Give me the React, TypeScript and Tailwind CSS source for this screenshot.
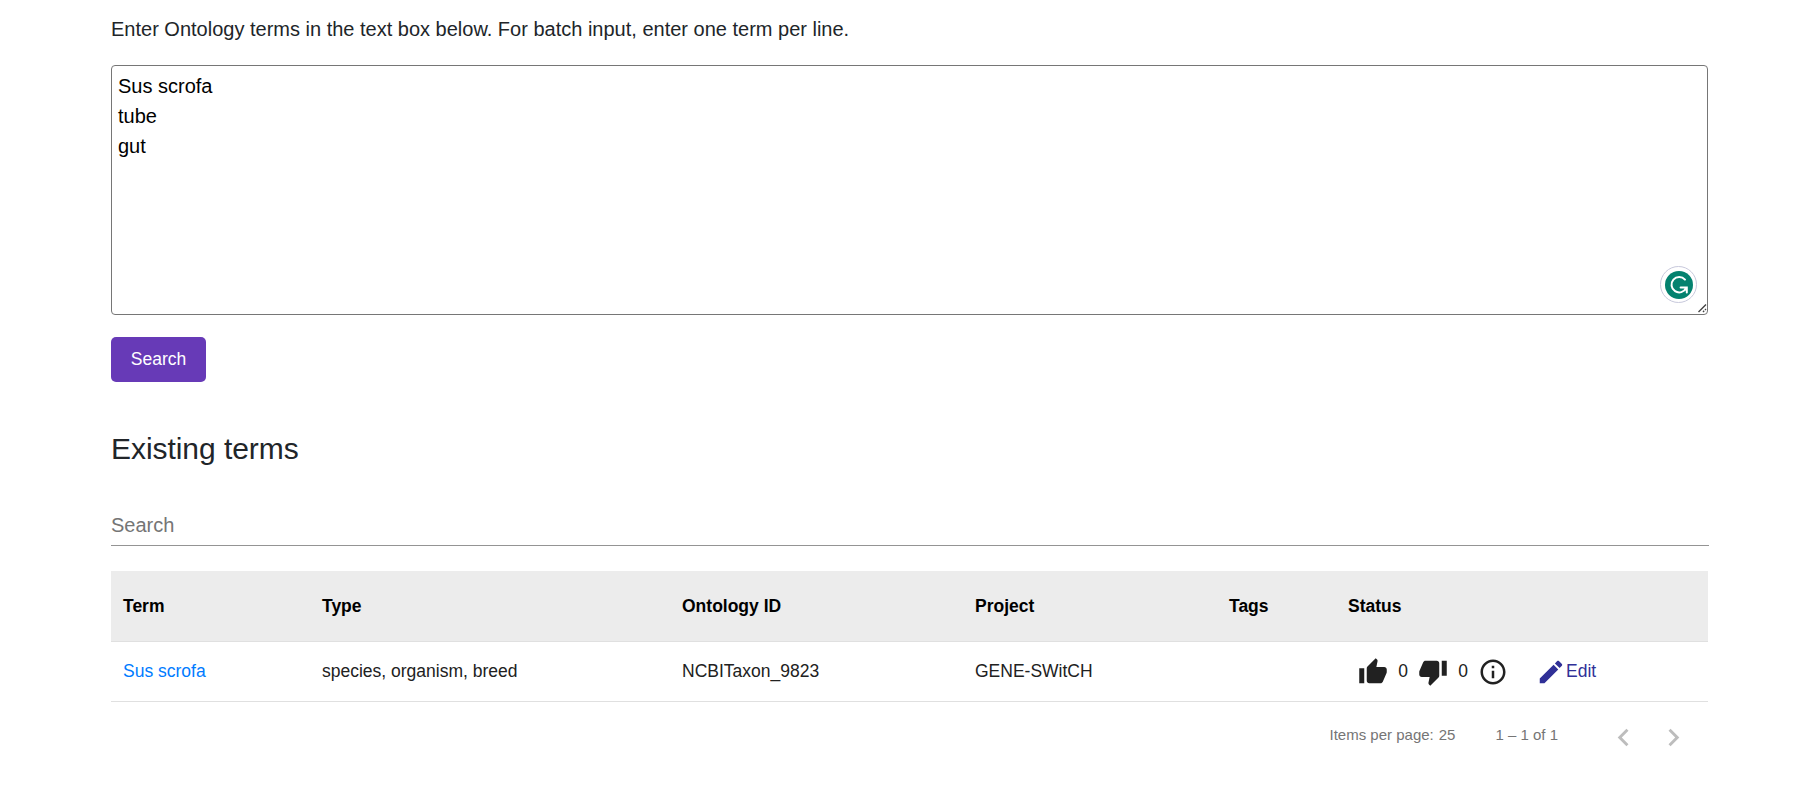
import type { ReactNode } from 'react';

const COLUMNS = 'grid grid-cols-[199px_360px_293px_254px_119px_188px_1fr] items-center pl-3';

function Icon({ d, className }: { d: string; className: string }) {
  return (
    <svg viewBox="0 0 24 24" fill="currentColor" className={`shrink-0 ${className}`}>
      <path d={d} />
    </svg>
  );
}

const THUMB_UP =
  'M1 21h4V9H1v12zm22-11c0-1.1-.9-2-2-2h-6.31l.95-4.57.03-.32c0-.41-.17-.79-.44-1.06L14.17 1 7.59 7.59C7.22 7.95 7 8.45 7 9v10c0 1.1.9 2 2 2h9c.83 0 1.54-.5 1.84-1.22l3.02-7.05c.09-.23.14-.47.14-.73v-2z';
const THUMB_DOWN =
  'M15 3H6c-.83 0-1.54.5-1.84 1.22l-3.02 7.05c-.09.23-.14.47-.14.73v2c0 1.1.9 2 2 2h6.31l-.95 4.57-.03.32c0 .41.17.79.44 1.06L9.83 23l6.59-6.59c.36-.36.58-.86.58-1.41V5c0-1.1-.9-2-2-2zm4 0v12h4V3h-4z';
const INFO =
  'M11 7h2v2h-2zm0 4h2v6h-2zm1-9C6.48 2 2 6.48 2 12s4.48 10 10 10 10-4.48 10-10S17.52 2 12 2zm0 18c-4.41 0-8-3.59-8-8s3.59-8 8-8 8 3.59 8 8-3.59 8-8 8z';
const EDIT =
  'M3 17.25V21h3.75L17.81 9.94l-3.75-3.75L3 17.25zM20.71 7.04c.39-.39.39-1.02 0-1.41l-2.34-2.34c-.39-.39-1.02-.39-1.41 0l-1.83 1.83 3.75 3.75 1.83-1.83z';
const PREV = 'M15.41 7.41L14 6l-6 6 6 6 1.41-1.41L10.83 12z';
const NEXT = 'M10 6L8.59 7.41 13.17 12l-4.58 4.59L10 18l6-6z';

function HeaderRow({ labels }: { labels: string[] }) {
  return (
    <div className={`${COLUMNS} h-[71px] border-b border-[#e0e0e0] bg-[#ececec] font-bold text-black`}>
      {labels.map((label) => (
        <div key={label}>{label}</div>
      ))}
    </div>
  );
}

function Row({ children }: { children: ReactNode }) {
  return <div className={`${COLUMNS} h-[60px] border-b border-[#e0e0e0] pb-px text-[#212121]`}>{children}</div>;
}

export default function App() {
  return (
    <main className="h-[805px] bg-white pl-[111px] pr-[94px] pt-[14px] font-['Liberation_Sans',Arial,sans-serif] text-[#212529]">
      <p className="text-[20px] leading-[30px]">
        Enter Ontology terms in the text box below. For batch input, enter one term per line.
      </p>

      <div className="relative mt-[21px] h-[250px]">
        <textarea
          className="block h-full w-full resize-none rounded-[4px] border border-[#767676] bg-white px-[6px] py-[5px] text-[20px] leading-[30px] text-black outline-none"
          defaultValue={'Sus scrofa\ntube\ngut'}
        />
        <div className="absolute right-[11px] bottom-[12px] flex size-[37px] items-center justify-center rounded-full border border-[#c8c9dc] bg-white">
          <svg viewBox="0 0 28 28" className="size-7">
            <circle cx="14" cy="14" r="14" fill="#04826f" />
            <path
              d="M20 8.6A7.7 7.7 0 1 0 21.2 17M15.6 16.4H21.8V21.6"
              fill="none"
              stroke="#fff"
              strokeWidth="2"
              strokeLinecap="round"
            />
          </svg>
        </div>
        <svg viewBox="0 0 9 9" className="absolute right-px bottom-[2px] size-[9px]">
          <path d="M.5 8L8 .5M5 8L6.2 6.8M7 6L8 5" stroke="#444" strokeWidth="1.4" fill="none" />
        </svg>
      </div>

      <button className="mt-[22px] block h-[45px] w-[95px] rounded-[5px] bg-[#673ab7] pb-px text-[17.5px] leading-[44px] text-white">
        Search
      </button>

      <h2 className="mt-[49px] text-[30px] leading-[36px] tracking-[-0.05px]">Existing terms</h2>

      <div className="mt-[42px] mr-[-1px] h-[37px] border-b border-[#949494] pt-px">
        <input
          className="block h-[30px] w-full text-[20px] leading-[30px] outline-none placeholder:text-[#757575]"
          placeholder="Search"
        />
      </div>

      <section className="mt-[25px] text-[17.5px] leading-[26px]">
        <HeaderRow labels={['Term', 'Type', 'Ontology ID', 'Project', 'Tags', 'Status']} />
        <Row>
          <a className="text-[#007bff]">Sus scrofa</a>
          <div>species, organism, breed</div>
          <div>NCBITaxon_9823</div>
          <div>GENE-SWitCH</div>
          <div />
          <div className="flex items-center pl-[10px]">
            <Icon d={THUMB_UP} className="mt-[2px] size-[30px]" />
            <span className="w-[30px] text-center">0</span>
            <Icon d={THUMB_DOWN} className="mt-[2px] size-[30px]" />
            <span className="w-[30px] text-center">0</span>
            <Icon d={INFO} className="mt-[2px] size-[30px]" />
          </div>
          <a className="flex items-center text-[#303097]">
            <Icon d={EDIT} className="mt-[2px] size-[30px]" />
            Edit
          </a>
        </Row>
        <footer className="flex h-[65px] items-center justify-end pr-[17px] text-[15px] text-[#757575]">
          <span className="mr-[5px]">Items per page:</span>
          <span className="mr-[40px]">25</span>
          <span>1 – 1 of 1</span>
          <div className="mt-[6px] ml-[48px] flex gap-[15px] text-[#bdbdbd]">
            <Icon d={PREV} className="size-[35px]" />
            <Icon d={NEXT} className="size-[35px]" />
          </div>
        </footer>
      </section>
    </main>
  );
}
